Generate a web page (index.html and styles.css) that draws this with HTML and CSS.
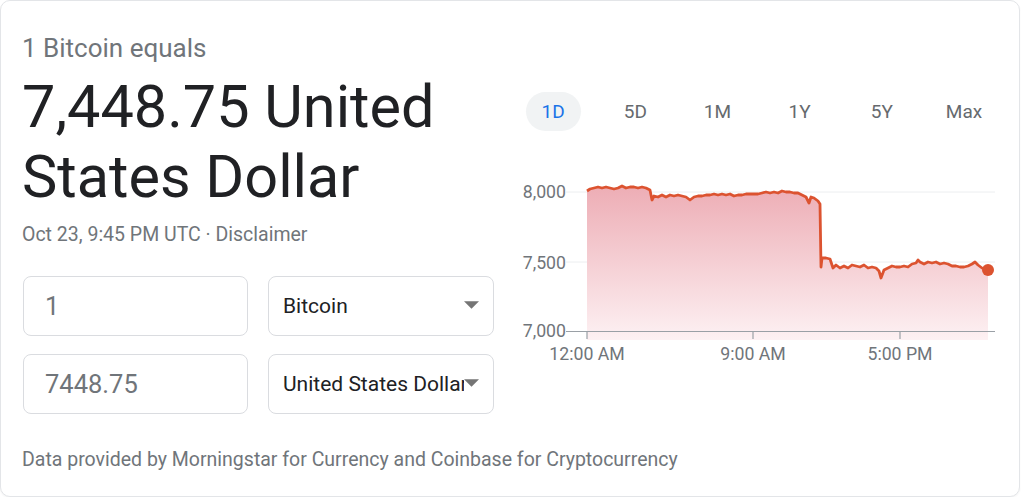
FILE: index.html
```html
<!DOCTYPE html>
<html>
<head>
<meta charset="utf-8">
<link rel="stylesheet" href="styles.css">
</head>
<body>
<div class="card">
  <div class="main">
    <div class="left">
      <div class="pre">1 Bitcoin equals</div>
      <div class="big">7,448.75 United States Dollar</div>
      <div class="date">Oct 23, 9:45 PM UTC · <span class="disc">Disclaimer</span></div>
      <div class="fields">
        <div class="field num">1</div>
        <div class="field sel"><span class="sel-text">Bitcoin</span><svg class="arrow" viewBox="0 0 16 8"><path d="M0 0h16L8 8z"/></svg></div>
        <div class="field num">7448.75</div>
        <div class="field sel"><span class="sel-text">United States Dollar</span><svg class="arrow" viewBox="0 0 16 8"><path d="M0 0h16L8 8z"/></svg></div>
      </div>
    </div>
    <div class="right">
      <div class="tabs">
        <div class="tab"><span class="pill active">1D</span></div>
        <div class="tab"><span class="pill">5D</span></div>
        <div class="tab"><span class="pill">1M</span></div>
        <div class="tab"><span class="pill">1Y</span></div>
        <div class="tab"><span class="pill">5Y</span></div>
        <div class="tab"><span class="pill">Max</span></div>
      </div>
      <svg class="chart" viewBox="505 175 500 195" width="500" height="195">
        <defs>
          <linearGradient id="fillg" x1="0" y1="0" x2="0" y2="1">
            <stop offset="0" stop-color="#edadb5"/>
            <stop offset="1" stop-color="#fdf1f3"/>
          </linearGradient>
        </defs>
        <line x1="566" y1="192" x2="995" y2="192" stroke="#eceef0" stroke-width="1"/>
        <line x1="566" y1="262" x2="995" y2="262" stroke="#eceef0" stroke-width="1"/>
        <polygon fill="url(#fillg)" points="587,191 590,189 594,188 598,187 602,188 606,187 610,188 614,189 618,188 622,186 626,188 630,187 634,187 638,188 642,187 646,188 650,190 652,200 654,196 658,197 662,195 666,197 670,195 674,196 678,195 682,196 686,197 690,200 694,197 698,196 702,196 706,195 710,195 714,194 718,195 722,194 726,195 730,194 734,196 738,195 742,195 746,194 750,194 754,194 758,194 762,193 766,192 770,193 774,192 778,193 782,191 786,192 790,192 794,193 798,193 802,195 806,197 809,203 811,197 814,198 818,201 820,204 821,267 822,258 826,258 830,259 833,268 836,265 840,268 844,266 848,268 852,265 856,266 860,267 864,265 868,268 872,267 876,268 879,271 881,278 884,270 888,268 892,266 896,267 900,267 904,266 908,267 912,264 916,263 918,260 920,262 924,264 928,262 932,263 936,262 940,264 944,263 948,264 952,266 956,266 960,267 964,267 968,266 972,264 975,262 978,265 982,268 988,270 988,340 587,340"/>
        <polyline fill="none" stroke="#dc5330" stroke-width="2.8" stroke-linejoin="round" points="587,191 590,189 594,188 598,187 602,188 606,187 610,188 614,189 618,188 622,186 626,188 630,187 634,187 638,188 642,187 646,188 650,190 652,200 654,196 658,197 662,195 666,197 670,195 674,196 678,195 682,196 686,197 690,200 694,197 698,196 702,196 706,195 710,195 714,194 718,195 722,194 726,195 730,194 734,196 738,195 742,195 746,194 750,194 754,194 758,194 762,193 766,192 770,193 774,192 778,193 782,191 786,192 790,192 794,193 798,193 802,195 806,197 809,203 811,197 814,198 818,201 820,204 821,267 822,258 826,258 830,259 833,268 836,265 840,268 844,266 848,268 852,265 856,266 860,267 864,265 868,268 872,267 876,268 879,271 881,278 884,270 888,268 892,266 896,267 900,267 904,266 908,267 912,264 916,263 918,260 920,262 924,264 928,262 932,263 936,262 940,264 944,263 948,264 952,266 956,266 960,267 964,267 968,266 972,264 975,262 978,265 982,268 988,270"/>
        <circle cx="988" cy="270" r="6" fill="#dc5330"/>
        <line x1="566" y1="331.5" x2="995" y2="331.5" stroke="#9aa0a6" stroke-width="1.2"/>
        <line x1="587" y1="331" x2="587" y2="339" stroke="#9aa0a6" stroke-width="1.2"/>
        <line x1="753" y1="331" x2="753" y2="339" stroke="#9aa0a6" stroke-width="1.2"/>
        <line x1="900" y1="331" x2="900" y2="339" stroke="#9aa0a6" stroke-width="1.2"/>
        <g class="axis">
          <text x="566" y="197.5" text-anchor="end">8,000</text>
          <text x="566" y="268.5" text-anchor="end">7,500</text>
          <text x="566" y="337" text-anchor="end">7,000</text>
          <text x="587" y="360" text-anchor="middle">12:00 AM</text>
          <text x="753" y="360" text-anchor="middle">9:00 AM</text>
          <text x="900" y="360" text-anchor="middle">5:00 PM</text>
        </g>
      </svg>
    </div>
  </div>
  <div class="foot">Data provided by Morningstar for Currency and Coinbase for Cryptocurrency</div>
</div>
</body>
</html>
```

FILE: styles.css
```css
html, body {
  margin: 0;
  padding: 0;
  background: #ffffff;
}
body {
  font-family: Roboto, Arial, sans-serif;
  color: #202124;
}
.card {
  box-sizing: border-box;
  width: 1020px;
  height: 497px;
  border: 1px solid #e3e5e8;
  border-radius: 10px;
  background: #fff;
  box-shadow: 0 1px 2px rgba(60,64,67,0.06);
}
.main {
  display: flex;
  gap: 12px;
}
.left {
  width: 471px;
  padding-left: 21px;
  padding-top: 32px;
}
.pre {
  font-size: 26px;
  line-height: 30px;
  color: #70757a;
}
.big {
  margin-top: 9px;
  font-size: 59.4px;
  line-height: 70px;
  color: #202124;
}
.date {
  margin-top: 11px;
  font-size: 19.5px;
  line-height: 24px;
  color: #70757a;
}
.fields {
  margin-top: 29px;
  display: grid;
  grid-template-columns: 225px 226px;
  column-gap: 20px;
  row-gap: 18px;
  padding-left: 1px;
}
.field {
  box-sizing: border-box;
  height: 60px;
  border: 1px solid #dadce0;
  border-radius: 8px;
  display: flex;
  align-items: center;
}
.num {
  padding-left: 21px;
  font-size: 25.5px;
  color: #70757a;
}
.sel {
  padding-left: 14px;
  padding-right: 14px;
  font-size: 21px;
  color: #202124;
}
.sel-text {
  flex: 1;
  min-width: 0;
  white-space: nowrap;
  overflow: hidden;
  text-overflow: clip;
}
.arrow {
  width: 15px;
  height: 8px;
  fill: #757575;
  flex: none;
  margin-top: -2px;
}
.right {
  width: 500px;
  padding-top: 90px;
}
.tabs {
  display: grid;
  grid-template-columns: repeat(6, 82.2px);
  margin-left: 7px;
  height: 40px;
}
.tab {
  display: flex;
  justify-content: center;
  align-items: center;
}
.pill {
  box-sizing: border-box;
  width: 55px;
  height: 39px;
  border-radius: 20px;
  display: flex;
  justify-content: center;
  align-items: center;
  font-size: 19px;
  color: #666a6e;
}
.pill.active {
  background: #f1f3f4;
  color: #1a73e8;
}
.chart {
  display: block;
  margin-top: 44px;
}
.axis text {
  font-family: Roboto, Arial, sans-serif;
  font-size: 17.7px;
  fill: #70757a;
}
.foot {
  padding-left: 21px;
  margin-top: 34px;
  font-size: 19.5px;
  line-height: 24px;
  color: #70757a;
}
```
